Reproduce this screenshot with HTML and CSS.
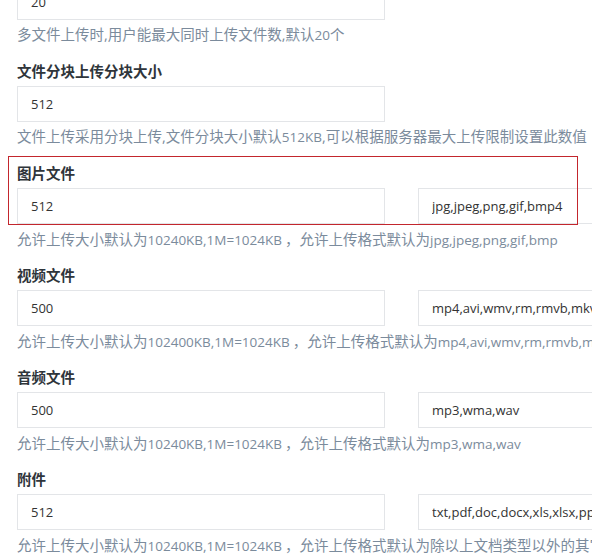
FILE: index.html
```html
<!DOCTYPE html>
<html lang="zh-CN">
<head>
<meta charset="utf-8">
<title>上传设置</title>
<link rel="stylesheet" href="styles.css">
</head>
<body>
<div class="page">
  <div class="group">
    <div class="label">多文件上传数量</div>
    <div class="row"><input class="field" type="text" value="20"></div>
    <div class="help">多文件上传时,用户能最大同时上传文件数,默认<span class="en">20</span>个</div>
  </div>
  <div class="group">
    <div class="label">文件分块上传分块大小</div>
    <div class="row"><input class="field" type="text" value="512"></div>
    <div class="help">文件上传采用分块上传,文件分块大小默认<span class="en">512KB</span>,可以根据服务器最大上传限制设置此数值</div>
  </div>
  <div class="group">
    <div class="label">图片文件</div>
    <div class="row"><input class="field" type="text" value="512"><input class="field" type="text" value="jpg,jpeg,png,gif,bmp4"></div>
    <div class="help">允许上传大小默认为<span class="en">10240KB,1M=1024KB</span><span class="punct">，</span>允许上传格式默认为<span class="en">jpg,jpeg,png,gif,bmp</span></div>
    <div class="mark"></div>
  </div>
  <div class="group">
    <div class="label">视频文件</div>
    <div class="row"><input class="field" type="text" value="500"><input class="field" type="text" value="mp4,avi,wmv,rm,rmvb,mkv"></div>
    <div class="help">允许上传大小默认为<span class="en">102400KB,1M=1024KB</span><span class="punct">，</span>允许上传格式默认为<span class="en">mp4,avi,wmv,rm,rmvb,mkv</span></div>
  </div>
  <div class="group">
    <div class="label">音频文件</div>
    <div class="row"><input class="field" type="text" value="500"><input class="field" type="text" value="mp3,wma,wav"></div>
    <div class="help">允许上传大小默认为<span class="en">10240KB,1M=1024KB</span><span class="punct">，</span>允许上传格式默认为<span class="en">mp3,wma,wav</span></div>
  </div>
  <div class="group">
    <div class="label">附件</div>
    <div class="row"><input class="field" type="text" value="512"><input class="field" type="text" value="txt,pdf,doc,docx,xls,xlsx,ppt,pptx"></div>
    <div class="help">允许上传大小默认为<span class="en">10240KB,1M=1024KB</span><span class="punct">，</span>允许上传格式默认为除以上文档类型以外的其它格式</div>
  </div>
</div>
</body>
</html>
```
FILE: styles.css
```css
html, body {
  margin: 0;
  padding: 0;
  background: #fff;
  overflow: hidden;
}
body {
  font-family: "Open Sans", "Noto Sans CJK SC", sans-serif;
}
.page {
  width: 820px;
  margin-top: -41px;
  padding: 0 17px;
}
.group {
  position: relative;
  margin-bottom: 16px;
}
.label {
  height: 20px;
  line-height: 20px;
  font-size: 14.5px;
  font-weight: bold;
  color: #2f353b;
  margin-bottom: 5px;
  white-space: nowrap;
  font-family: "Noto Sans CJK SC", sans-serif;
}
.row {
  display: flex;
  gap: 33px;
}
.field {
  box-sizing: border-box;
  width: 368px;
  height: 36px;
  margin: 0;
  padding: 0 13px;
  border: 1px solid #e3e5e8;
  border-radius: 0;
  background: #fff;
  font-family: "Open Sans", "Noto Sans CJK SC", sans-serif;
  font-size: 13px;
  color: #333;
  outline: none;
}
.help {
  margin-top: 5px;
  height: 20px;
  line-height: 20px;
  font-size: 14.5px;
  color: #7b8b9c;
  white-space: nowrap;
}
.help .en {
  font-size: 13.5px;
}
.help .punct {
  font-family: "Noto Sans CJK SC", sans-serif;
  margin-left: 3px;
}
.mark {
  position: absolute;
  left: -9px;
  top: -7px;
  width: 568px;
  height: 67px;
  border: 1px solid #c3262d;
  pointer-events: none;
}
```
